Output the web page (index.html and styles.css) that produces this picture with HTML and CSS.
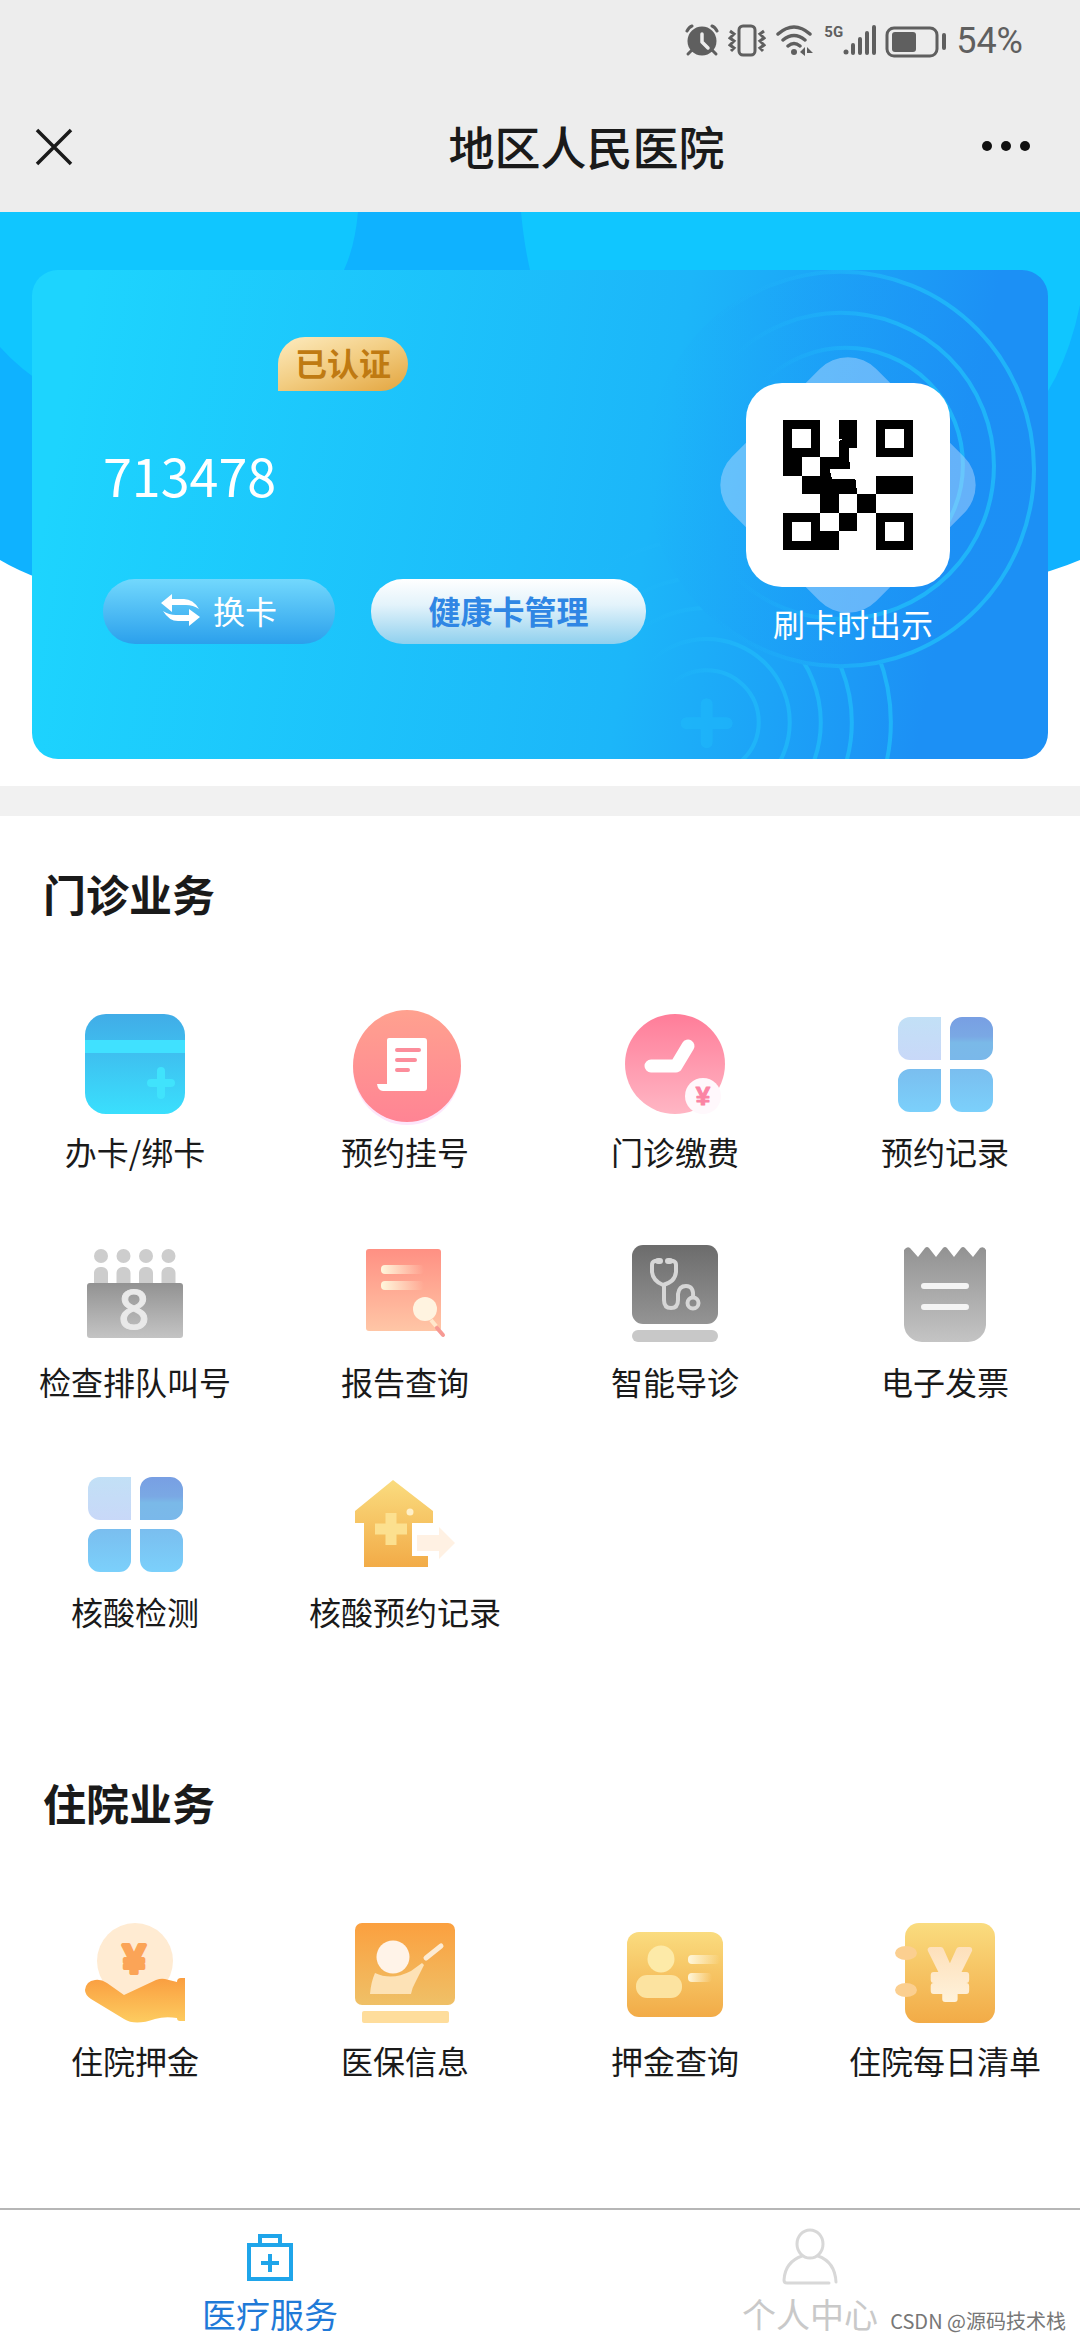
FILE: index.html
```html
<!DOCTYPE html>
<html lang="zh-CN">
<head>
    <meta charset="UTF-8">
    <meta name="viewport" content="width=device-width, initial-scale=1.0">
    <title>地区人民医院</title>
    <link rel="stylesheet" href="styles.css">
</head>
<body>
    <!-- shared gradients and the four-tile icon -->
    <svg class="sprite" aria-hidden="true">
        <defs>
            <linearGradient id="gCard" x1="0" y1="0" x2="0" y2="1"><stop offset="0" stop-color="#41ace7"/><stop offset="1" stop-color="#3adffd"/></linearGradient>
            <linearGradient id="gCoral" x1="0" y1="0" x2="0" y2="1"><stop offset="0" stop-color="#ffa18f"/><stop offset="1" stop-color="#ff8494"/></linearGradient>
            <linearGradient id="gPink" x1="0" y1="0" x2="0" y2="1"><stop offset="0" stop-color="#ff7d99"/><stop offset="1" stop-color="#ffb6c4"/></linearGradient>
            <linearGradient id="gPale" x1="0" y1="0" x2="0" y2="1"><stop offset="0" stop-color="#c2e0f6"/><stop offset="1" stop-color="#c8d8f8"/></linearGradient>
            <linearGradient id="gIndigo" x1="0" y1="0" x2="0" y2="1"><stop offset="0" stop-color="#789fe3"/><stop offset=".45" stop-color="#7aa8e4"/><stop offset=".6" stop-color="#7ab9e8"/><stop offset="1" stop-color="#7ab8ea"/></linearGradient>
            <linearGradient id="gSky" x1="0" y1="0" x2="0" y2="1"><stop offset="0" stop-color="#7abeef"/><stop offset="1" stop-color="#7bd0fb"/></linearGradient>
            <linearGradient id="gGrey" x1="0" y1="0" x2="0" y2="1"><stop offset="0" stop-color="#929292"/><stop offset="1" stop-color="#c4c4c4"/></linearGradient>
            <linearGradient id="gDark" x1="0" y1="0" x2="0" y2="1"><stop offset="0" stop-color="#6c6c6c"/><stop offset="1" stop-color="#949494"/></linearGradient>
            <linearGradient id="gPeach" x1="0" y1="0" x2="0" y2="1"><stop offset="0" stop-color="#ff9083"/><stop offset="1" stop-color="#ffc6a6"/></linearGradient>
            <linearGradient id="gLine" x1="0" y1="0" x2="1" y2="0"><stop offset="0" stop-color="#fff7dc"/><stop offset="1" stop-color="#fff7dc" stop-opacity="0"/></linearGradient>
            <linearGradient id="gGold" x1="0" y1="0" x2="0" y2="1"><stop offset="0" stop-color="#fadc7f"/><stop offset="1" stop-color="#f2ab47"/></linearGradient>
            <linearGradient id="gHand" x1="0" y1="0" x2="0" y2="1"><stop offset="0" stop-color="#fa9e40"/><stop offset="1" stop-color="#fdcc60"/></linearGradient>
            <linearGradient id="gBoard" x1="0" y1="0" x2="0" y2="1"><stop offset="0" stop-color="#fba03f"/><stop offset="1" stop-color="#efc067"/></linearGradient>
            <linearGradient id="gYen" x1="0" y1="0" x2="0" y2="1"><stop offset="0" stop-color="#fddcb4"/><stop offset="1" stop-color="#fff6e2"/></linearGradient>
            <linearGradient id="gRing" x1="0" y1="0" x2="1" y2="0"><stop offset=".15" stop-color="#1fb9fa" stop-opacity="0"/><stop offset=".7" stop-color="#1fb4f9"/></linearGradient>
            <linearGradient id="gDisc" x1="0" y1="0" x2="1" y2="0"><stop offset="0" stop-color="#1c8ff5" stop-opacity="0"/><stop offset="1" stop-color="#1c8ff5" stop-opacity=".35"/></linearGradient>
        </defs>
        <symbol id="tiles" viewBox="0 0 100 100">
            <path fill="url(#gPale)" d="M15 3h31v43H15A12 12 0 0 1 3 34V15A12 12 0 0 1 15 3z"/>
            <path fill="url(#gIndigo)" d="M67 3h18a13 13 0 0 1 13 12v19a12 12 0 0 1-12 12H55V15A12 12 0 0 1 67 3z"/>
            <path fill="url(#gSky)" d="M15 55h31v30a12 12 0 0 1-12 13H15A12 12 0 0 1 3 86V67A12 12 0 0 1 15 55z"/>
            <path fill="url(#gSky)" d="M55 55h31a12 12 0 0 1 12 12v19a12 12 0 0 1-12 12H67a12 12 0 0 1-12-12z"/>
        </symbol>
    </svg>

    <div class="page">
        <header class="top">
            <div class="status-bar">
                <svg width="34" height="34" viewBox="0 0 34 34">
                    <circle cx="17" cy="17" r="14.5" fill="#5f5f5f"/>
                    <path d="M7 26l-4 4M27 26l4 4" stroke="#5f5f5f" stroke-width="3" stroke-linecap="round"/>
                    <path d="M2 7q2-4 5-5M32 7q-2-4-5-5" fill="none" stroke="#5f5f5f" stroke-width="3" stroke-linecap="round"/>
                    <path d="M17 10v8l6 6" fill="none" stroke="#ededed" stroke-width="3.5" stroke-linecap="round" stroke-linejoin="round"/>
                </svg>
                <svg width="38" height="34" viewBox="0 0 38 34" fill="none" stroke="#5f5f5f" stroke-width="3">
                    <rect x="11" y="2" width="16" height="29" rx="4"/>
                    <path d="M2 7l4 3-4 4 4 3-4 4 4 3-3 3M36 7l-4 3 4 4-4 3 4 4-4 3 3 3"/>
                </svg>
                <svg width="40" height="34" viewBox="0 0 40 34" fill="none" stroke="#5f5f5f" stroke-width="3.5" stroke-linecap="round">
                    <path d="M3 10q16-14 32 0M8 16q11-9 22 0M13 22q6-5 12 0"/>
                    <circle cx="19" cy="28" r="3" fill="#5f5f5f" stroke="none"/>
                    <path d="M25 28l5-5v9M32 32v-9l6 6h-6" fill="#5f5f5f" stroke="none"/>
                </svg>
                <span class="net">5G</span>
                <svg class="bars" width="34" height="34" viewBox="0 0 34 34">
                    <circle cx="4" cy="28" r="2.5" fill="#5f5f5f"/>
                    <path d="M11 21v8M18 15v14M25 9v20M32 3v26" stroke="#5f5f5f" stroke-width="4" stroke-linecap="round"/>
                </svg>
                <svg width="62" height="34" viewBox="0 0 62 34">
                    <rect x="2" y="4" width="50" height="28" rx="7" fill="none" stroke="#5f5f5f" stroke-width="3"/>
                    <rect x="7" y="8" width="24" height="20" rx="3" fill="#5f5f5f"/>
                    <path d="M59 11v13" stroke="#5f5f5f" stroke-width="4" stroke-linecap="round"/>
                </svg>
                <span class="battery">54%</span>
            </div>
            <div class="nav-bar">
                <button class="nav-btn" type="button" aria-label="关闭">
                    <svg width="40" height="40" viewBox="0 0 40 40"><path d="M3 3l34 34M37 3L3 37" stroke="#1a1a1a" stroke-width="3.5"/></svg>
                </button>
                <h1 class="nav-title">地区人民医院</h1>
                <button class="nav-btn" type="button" aria-label="更多">
                    <svg width="50" height="40" viewBox="0 0 50 40" fill="#111"><circle cx="6" cy="19" r="5"/><circle cx="25" cy="19" r="5"/><circle cx="44" cy="19" r="5"/></svg>
                </button>
            </div>
        </header>

        <main>
            <section class="banner">
                <svg class="banner-bg" viewBox="0 0 1080 420" preserveAspectRatio="none" aria-hidden="true">
                    <path fill="#0fb2ff" d="M0 0h1080v348Q960 400 540 410T0 348z"/>
                    <path fill="#10c6ff" d="M0 0h358q-3 34-14 58Q260 260 120 210 40 180 0 135z"/>
                    <path fill="#10c6ff" d="M1080 0H521q3 32 9 58 90 230 400 200 120-20 150-165z"/>
                </svg>
                <div class="card">
                    <svg class="card-art" viewBox="0 0 1015 489" preserveAspectRatio="xMaxYMid slice" fill="none" aria-hidden="true">
                        <clipPath id="below"><path clip-rule="evenodd" d="M0 0h1015v489H0zM613 199a195 199 0 1 0 390 0 195 199 0 1 0-390 0z"/></clipPath>
                        <ellipse cx="808" cy="199" rx="195" ry="199" fill="url(#gDisc)"/>
                        <g stroke="url(#gRing)" stroke-width="4">
                            <ellipse cx="808" cy="199" rx="193" ry="197"/>
                            <circle cx="808" cy="196" r="153"/>
                            <circle cx="813" cy="195" r="117"/>
                        </g>
                        <g stroke="url(#gRing)" stroke-width="4" clip-path="url(#below)">
                            <circle cx="674" cy="452" r="52"/>
                            <circle cx="674" cy="452" r="83"/>
                            <circle cx="674" cy="452" r="114"/>
                            <circle cx="674" cy="452" r="145"/>
                            <circle cx="674" cy="452" r="184"/>
                        </g>
                        <path d="M674 434v38M654 453h40" stroke="#1ebcfb" stroke-width="12" stroke-linecap="round" opacity=".45"/>
                    </svg>
                    <div class="card-info">
                        <span class="badge">已认证</span>
                        <div class="card-no">713478</div>
                        <div class="card-actions">
                            <button class="pill pill-blue" type="button">
                                <svg width="40" height="32" viewBox="0 0 40 32" fill="#fff">
                                    <path d="M0 9l11-9v5h12q9 0 15 10-6-4-13-4H11v7z"/>
                                    <path d="M39 23l-11 9v-5H17Q8 27 2 17q6 4 13 4h13v-6z"/>
                                </svg>
                                换卡
                            </button>
                            <button class="pill pill-white" type="button">健康卡管理</button>
                        </div>
                    </div>
                    <div class="card-qr">
                        <div class="qr-box">
                            <svg width="130" height="130" viewBox="0 0 14 14" role="img" aria-label="二维码" shape-rendering="crispEdges">
                                <path fill-rule="evenodd" d="M0 0h4v4H0zM1 1v2h2V1zM10 0h4v4h-4zM11 1v2h2V1zM0 10h4v4H0zM1 11v2h2v-2zM10 10h4v4h-4zM11 11v2h2v-2z"/>
                                <path d="M0 4h2v2H0zM4 12h2v2H4zM6 10h2v2H6zM8 8h2v2H8zM10 6h4v2h-4zM4 8h2v2H4z"/>
                                <path d="M6 0h2v3h-.9l.1 2.3H5l.3 1.1h2.5L8 8H2V6h2V4h2V2.3l.6-.3H6z"/>
                            </svg>
                        </div>
                        <div class="qr-tip">刷卡时出示</div>
                    </div>
                </div>
            </section>

            <section class="services">
                <h2>门诊业务</h2>
                <div class="grid">
                    <a class="item" href="#">
                        <svg class="icon" viewBox="0 0 100 100">
                            <rect width="100" height="100" rx="21" fill="url(#gCard)"/>
                            <path d="M0 26h100v13H0z" fill="#40e1ff"/>
                            <path d="M76 57v24M66 69h20" stroke="#40e3fc" stroke-width="8" stroke-linecap="round"/>
                        </svg>
                        <span>办卡/绑卡</span>
                    </a>
                    <a class="item" href="#">
                        <svg class="icon" viewBox="0 0 100 100">
                            <ellipse cx="52" cy="54" rx="54" ry="57" fill="#fde6fb"/>
                            <ellipse cx="52" cy="52" rx="54" ry="56" fill="url(#gCoral)"/>
                            <path d="M34 24h35a3 3 0 0 1 3 3v47a3 3 0 0 1-3 3H28q-5 0-6-7h10V26a2 2 0 0 1 2-2z" fill="#fff"/>
                            <path d="M42 36h22M42 46h18M42 56h11" stroke="#fc8d9b" stroke-width="4" stroke-linecap="round"/>
                        </svg>
                        <span>预约挂号</span>
                    </a>
                    <a class="item" href="#">
                        <svg class="icon" viewBox="0 0 100 100">
                            <circle cx="50" cy="50" r="50" fill="url(#gPink)"/>
                            <path d="M26 52h25l12-20" fill="none" stroke="#fff" stroke-width="13" stroke-linecap="round" stroke-linejoin="round"/>
                            <circle cx="78" cy="82" r="18" fill="#fff8fc"/>
                            <text class="yen yen-small" x="78" y="91">¥</text>
                        </svg>
                        <span>门诊缴费</span>
                    </a>
                    <a class="item" href="#">
                        <svg class="icon"><use href="#tiles"/></svg>
                        <span>预约记录</span>
                    </a>
                    <a class="item" href="#">
                        <svg class="icon" viewBox="0 0 100 100">
                            <g fill="#cdcdcd">
                                <circle cx="16" cy="12" r="7"/><circle cx="38.500" cy="12" r="7"/><circle cx="61" cy="12" r="7"/><circle cx="83.500" cy="12" r="7"/>
                                <path d="M9 39V29a6 6 0 0 1 6-6h2a6 6 0 0 1 6 6v10zM31.500 39V29a6 6 0 0 1 6-6h2a6 6 0 0 1 6 6v10zM54 39V29a6 6 0 0 1 6-6h2a6 6 0 0 1 6 6v10zM76.500 39V29a6 6 0 0 1 6-6h2a6 6 0 0 1 6 6v10z"/>
                            </g>
                            <rect x="2" y="39" width="96" height="55" rx="3" fill="url(#gGrey)"/>
                            <text class="queue-no" x="49" y="85">8</text>
                        </svg>
                        <span>检查排队叫号</span>
                    </a>
                    <a class="item" href="#">
                        <svg class="icon" viewBox="0 0 100 100">
                            <rect x="11" y="5" width="75" height="82" rx="3" fill="url(#gPeach)"/>
                            <rect x="26" y="21" width="43" height="9" rx="4" fill="url(#gLine)"/>
                            <rect x="26" y="37" width="43" height="9" rx="4" fill="url(#gLine)"/>
                            <path d="M76 76l5 6" stroke="#ffe8cc" stroke-width="4"/>
                            <path d="M82 84l6 7" stroke="#f79a94" stroke-width="4" stroke-linecap="round"/>
                            <circle cx="70" cy="65" r="12" fill="#fff3e0"/>
                        </svg>
                        <span>报告查询</span>
                    </a>
                    <a class="item" href="#">
                        <svg class="icon" viewBox="0 0 100 100">
                            <rect x="7" y="1" width="86" height="79" rx="11" fill="url(#gDark)"/>
                            <rect x="7" y="86" width="86" height="12" rx="6" fill="#c8c8c8"/>
                            <g fill="none" stroke="#d6d6d6" stroke-width="4" stroke-linecap="round">
                                <path d="M34 17q-7-1-7 4v7q1 9 11 13 12-3 13-13v-7q0-5-7-4"/>
                                <path d="M39 41v15q0 8 7 8t7-8v-6q1-8 8-8 8 0 7 11"/>
                                <circle cx="68" cy="59" r="5.500"/>
                            </g>
                            <path d="M33 17h2M43 17h2" stroke="#d6d6d6" stroke-width="6" stroke-linecap="round"/>
                        </svg>
                        <span>智能导诊</span>
                    </a>
                    <a class="item" href="#">
                        <svg class="icon" viewBox="0 0 100 100">
                            <path fill="url(#gGrey)" d="M9 6q3-4 6-2l8 9 7-9q2-2 4 0l7 9 7-9q2-2 4 0l7 9 7-9q2-2 4 0l8 9 7-9q4-2 6 2v75a18 18 0 0 1-18 17H27A18 18 0 0 1 9 81z"/>
                            <path d="M29 42h42M29 63h42" stroke="#f4f4f4" stroke-width="6" stroke-linecap="round"/>
                        </svg>
                        <span>电子发票</span>
                    </a>
                    <a class="item" href="#">
                        <svg class="icon"><use href="#tiles"/></svg>
                        <span>核酸检测</span>
                    </a>
                    <a class="item" href="#">
                        <svg class="icon" viewBox="0 0 100 100">
                            <path fill="url(#gGold)" d="M38 6l40 31v12H57v33h16v11H9V49H0V37z"/>
                            <path d="M36 39v32M20 55h32" stroke="#fce08f" stroke-width="11"/>
                            <circle cx="55" cy="38" r="3.500" fill="#fff0c8"/>
                            <path d="M62 61h22v-8l16 16-16 16v-8H62z" fill="#fff1e3"/>
                        </svg>
                        <span>核酸预约记录</span>
                    </a>
                </div>
            </section>

            <section class="services">
                <h2>住院业务</h2>
                <div class="grid">
                    <a class="item" href="#">
                        <svg class="icon" viewBox="0 0 100 100">
                            <circle cx="50" cy="38" r="38" fill="#ffebd2"/>
                            <text class="yen yen-coin" x="49" y="50">¥</text>
                            <path fill="url(#gHand)" d="M10 57q6-1 12 3l17 12 32-15q5-2 9-1l12 3q0-4 4-4h4v43h-5q-3 0-3-3-12-2-22 1-20 7-31 0L6 76q-6-4-6-9 1-9 10-10z"/>
                        </svg>
                        <span>住院押金</span>
                    </a>
                    <a class="item" href="#">
                        <svg class="icon" viewBox="0 0 100 100">
                            <rect width="100" height="82" rx="7" fill="url(#gBoard)"/>
                            <path d="M20 50q17 8 36-2l11-8 2 2-9 18q-3 5-4 11H15q1-12 5-21z" fill="#fde2b6"/>
                            <circle cx="38" cy="34" r="16.500" fill="#fff3e8"/>
                            <path d="M71 35l15-12" stroke="#fdebd3" stroke-width="5" stroke-linecap="round"/>
                            <rect x="7" y="88" width="87" height="12" rx="2" fill="#fedd9c"/>
                        </svg>
                        <span>医保信息</span>
                    </a>
                    <a class="item" href="#">
                        <svg class="icon" viewBox="0 0 100 100">
                            <rect x="2" y="9" width="96" height="85" rx="12" fill="url(#gGold)"/>
                            <circle cx="36" cy="36" r="13.500" fill="#fdeaa8"/>
                            <rect x="11" y="52" width="46" height="23" rx="11" fill="#fce3a0"/>
                            <rect x="63" y="32" width="32" height="9" rx="4" fill="url(#gLine)"/>
                            <rect x="63" y="50" width="24" height="9" rx="4" fill="url(#gLine)"/>
                        </svg>
                        <span>押金查询</span>
                    </a>
                    <a class="item" href="#">
                        <svg class="icon" viewBox="0 0 100 100">
                            <rect x="10" width="90" height="100" rx="14" fill="url(#gGold)"/>
                            <g fill="#fbcf90"><ellipse cx="11" cy="30" rx="11" ry="7"/><ellipse cx="11" cy="67" rx="11" ry="7"/></g>
                            <text class="yen yen-bill" x="55" y="76">¥</text>
                        </svg>
                        <span>住院每日清单</span>
                    </a>
                </div>
            </section>
        </main>

        <nav class="tab-bar">
            <a class="tab active" href="#">
                <svg width="60" height="60" viewBox="0 0 60 60" fill="none" stroke="#1fa5ea" stroke-width="4">
                    <path d="M9 17h42v34H9zM20 17V8h20v9M30 26v18M21 35h18"/>
                </svg>
                <span>医疗服务</span>
            </a>
            <a class="tab" href="#">
                <svg width="60" height="60" viewBox="0 0 60 60" fill="none" stroke="#d8d8d8" stroke-width="3" stroke-linecap="round">
                    <ellipse cx="30" cy="16" rx="13" ry="14"/>
                    <path d="M22 28Q5 34 4 52q0 3 3 3h42M38 28q17 6 18 26"/>
                </svg>
                <span>个人中心</span>
            </a>
            <span class="watermark">CSDN @源码技术栈</span>
        </nav>
    </div>
</body>
</html>
```

FILE: styles.css
```css
* {
    box-sizing: border-box;
}
body {
    margin: 0;
    font-family: 'Noto Sans CJK SC', sans-serif;
    color: #1a1a1a;
    background: #fff;
}
button {
    border: none;
    padding: 0;
    background: none;
    font-family: inherit;
    cursor: pointer;
}
a {
    color: inherit;
    text-decoration: none;
}
.sprite {
    position: absolute;
    width: 0;
    height: 0;
}
.page {
    display: flex;
    flex-direction: column;
    min-height: 100vh;
}
main {
    flex: 1;
}

/* status bar and title */
.top {
    background: #ededed;
}
.status-bar {
    display: flex;
    align-items: center;
    justify-content: flex-end;
    gap: 9px;
    height: 82px;
    padding-right: 57px;
}
.net {
    padding-bottom: 18px;
    color: #5f5f5f;
    font: bold 15px/16px Roboto, sans-serif;
}
.bars {
    margin-left: -10px;
}
.battery {
    font: 36px/40px Roboto, sans-serif;
    color: #5f5f5f;
}
.nav-bar {
    display: flex;
    align-items: center;
    justify-content: space-between;
    height: 130px;
    padding: 0 49px 0 34px;
}
.nav-btn {
    display: flex;
    width: 50px;
}
.nav-title {
    margin: 0;
    padding: 0 0 5px 108px;
    font-size: 46px;
    font-weight: 500;
    line-height: 60px;
}

/* health card */
.banner {
    position: relative;
    padding: 58px 32px 27px;
    border-bottom: 30px solid #f1f1f1;
}
.banner-bg {
    position: absolute;
    top: 0;
    left: 0;
    width: 100%;
    height: 420px;
}
.card {
    position: relative;
    display: flex;
    justify-content: space-between;
    padding: 67px 98px 115px 71px;
    border-radius: 26px;
    background: linear-gradient(100deg, #1dd4fe 5%, #1cb6f9 60%, #1c90f5 88%);
    overflow: hidden;
    color: #fff;
}
.card-art {
    position: absolute;
    top: 0;
    left: 0;
    width: 100%;
    height: 100%;
}
.card-info,
.card-qr {
    position: relative;
    z-index: 1;
}
.badge {
    display: block;
    width: 130px;
    padding-bottom: 4px;
    margin-left: 175px;
    border-radius: 27px 27px 27px 0;
    background: linear-gradient(160deg, #fdebbf, #f2cc80 50%, #e3a53f);
    color: #bf7a12;
    font-size: 32px;
    font-weight: bold;
    line-height: 50px;
    text-align: center;
}
.card-no {
    margin: 54px 0 74px;
    font-size: 52px;
    line-height: 60px;
}
.card-actions {
    display: flex;
    gap: 36px;
}
.pill {
    display: flex;
    align-items: center;
    justify-content: center;
    gap: 12px;
    height: 65px;
    padding-bottom: 4px;
    border-radius: 32px;
    font-size: 32px;
}
.pill-blue {
    width: 232px;
    background: linear-gradient(#72d8fd, #2ba0ec);
    color: #fff;
}
.pill-white {
    width: 275px;
    background: linear-gradient(#fff, #e3f3fb 40%, #8fd0ee);
    color: #2f86e4;
    font-weight: bold;
}
.card-qr {
    padding-top: 46px;
}
.qr-box {
    position: relative;
    display: flex;
    align-items: center;
    justify-content: center;
    width: 204px;
    height: 204px;
    border-radius: 36px;
    background: #fff;
}
.qr-box::before {
    content: "";
    position: absolute;
    inset: 0;
    z-index: -1;
    border-radius: 40px;
    background: rgba(190, 220, 255, 0.45);
    transform: rotate(45deg);
}
.qr-tip {
    margin-top: 16px;
    padding-left: 10px;
    font-size: 32px;
    line-height: 40px;
    text-align: center;
}

/* service lists */
.services {
    padding: 47px 0 94px;
}
.services:last-child {
    padding-bottom: 40px;
}
.services h2 {
    margin: 0 43px 91px;
    font-size: 43px;
    font-weight: bold;
    line-height: 60px;
}
.grid {
    display: grid;
    grid-template-columns: repeat(4, 1fr);
    row-gap: 73px;
}
.item {
    display: flex;
    flex-direction: column;
    align-items: center;
    gap: 17px;
    font-size: 32px;
    line-height: 40px;
    white-space: nowrap;
}
.icon {
    width: 100px;
    height: 100px;
    overflow: visible;
}
.queue-no {
    font: 500 54px 'Noto Sans', sans-serif;
    fill: #e9e9e9;
    stroke: #e9e9e9;
    stroke-width: 1px;
    text-anchor: middle;
}
.yen {
    font-family: 'Liberation Sans', sans-serif;
    font-weight: bold;
    text-anchor: middle;
    stroke-linejoin: round;
}
.yen-small {
    font-size: 26px;
    fill: #fb84a4;
    stroke: #fb84a4;
    stroke-width: 1px;
}
.yen-coin {
    font-size: 40px;
    fill: #fba457;
    stroke: #fba457;
    stroke-width: 4px;
}
.yen-bill {
    font-size: 70px;
    fill: url(#gYen);
    stroke: url(#gYen);
    stroke-width: 6px;
}

/* bottom tabs */
.tab-bar {
    position: relative;
    display: flex;
    border-top: 2px solid #b6b6b6;
    background: #fff;
}
.tab {
    flex: 1;
    display: flex;
    flex-direction: column;
    align-items: center;
    gap: 6px;
    padding: 18px 0 6px;
    color: #c9c9c9;
    font-size: 34px;
    line-height: 40px;
}
.tab.active {
    color: #1f7ad8;
}
.watermark {
    position: absolute;
    right: 14px;
    bottom: 4px;
    color: #777;
    font-size: 20px;
    line-height: 30px;
    text-shadow: 1px 1px 0 #fff;
}
```
